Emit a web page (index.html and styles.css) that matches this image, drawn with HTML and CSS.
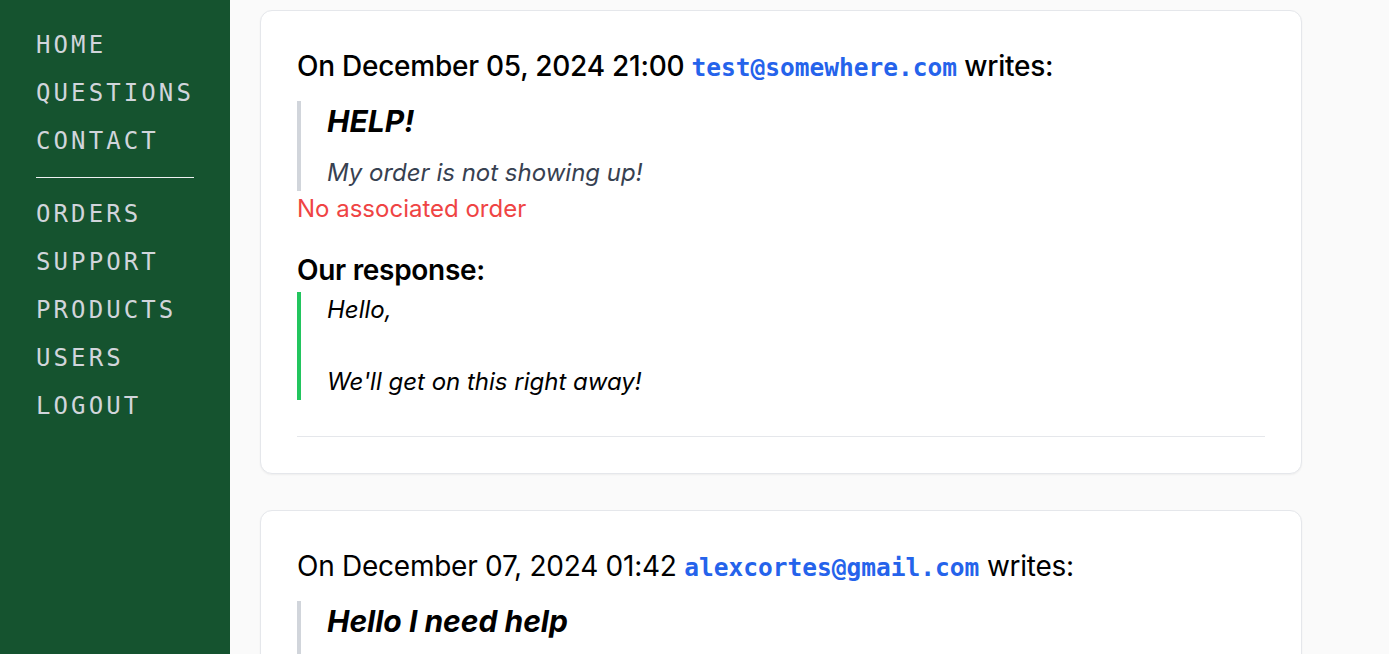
FILE: index.html
```html
<!DOCTYPE html>
<html lang="en">
<head>
<meta charset="utf-8">
<title>Questions</title>
<link rel="stylesheet" href="styles.css">
</head>
<body>
<div class="layout">
  <nav class="sidebar">
    <a class="nav-link" href="#">HOME</a>
    <a class="nav-link" href="#">QUESTIONS</a>
    <a class="nav-link" href="#">CONTACT</a>
    <div class="nav-divider"></div>
    <a class="nav-link" href="#">ORDERS</a>
    <a class="nav-link" href="#">SUPPORT</a>
    <a class="nav-link" href="#">PRODUCTS</a>
    <a class="nav-link" href="#">USERS</a>
    <a class="nav-link" href="#">LOGOUT</a>
  </nav>
  <main class="main">
    <div class="list">
      <article class="card">
        <div class="meta meta-medium">On December 05, 2024 21:00 <span class="email">test@somewhere.com</span> writes:</div>
        <blockquote class="question">
          <div class="subject">HELP!</div>
          <p class="body">My order is not showing up!</p>
        </blockquote>
        <div class="no-order">No associated order</div>
        <div class="response-label">Our response:</div>
        <blockquote class="response">Hello,

We'll get on this right away!</blockquote>
        <div class="rule"></div>
      </article>
      <article class="card">
        <div class="meta">On December 07, 2024 01:42 <span class="email">alexcortes@gmail.com</span> writes:</div>
        <blockquote class="question question-open">
          <div class="subject">Hello I need help</div>
        </blockquote>
      </article>
    </div>
  </main>
</div>
</body>
</html>
```
FILE: styles.css
```css
* { box-sizing: border-box; }
html, body { margin: 0; padding: 0; height: 100%; }
body {
  font-family: Inter, "Noto Sans", sans-serif;
  font-size: 24px;
  line-height: 36px;
  color: #000;
  background: #fafafa;
  overflow: hidden;
}
.layout {
  display: flex;
  min-height: 100vh;
}
.sidebar {
  flex: 0 0 230px;
  width: 230px;
  background: #15532f;
  padding: 21px 36px 0 36px;
  display: flex;
  flex-direction: column;
  align-items: flex-start;
}
.nav-link {
  font-family: "DejaVu Sans Mono", monospace;
  font-size: 24px;
  line-height: 48px;
  letter-spacing: 3.1px;
  color: #d1d5db;
  text-decoration: none;
}
.nav-divider {
  align-self: stretch;
  height: 1px;
  background: #eef0f2;
  margin: 12px 0 12px 0;
}
.main {
  flex: 1;
  padding: 10px 30px;
}
.list {
  width: 1042px;
  display: flex;
  flex-direction: column;
  gap: 36px;
}
.card {
  background: #fff;
  border: 1px solid #e5e7eb;
  border-radius: 12px;
  box-shadow: 0 1px 2px rgba(0,0,0,0.05);
  padding: 37px 36px 36px 36px;
}
.meta {
  font-size: 28px;
  font-weight: 400;
  letter-spacing: -0.25px;
}
.meta-medium { font-weight: 500; }
.email {
  font-family: "DejaVu Sans Mono", monospace;
  font-weight: 700;
  font-size: 24.5px;
  letter-spacing: 0;
  color: #2563eb;
}
.question {
  margin: 15px 0 0 0;
  border-left: 4px solid #d1d5db;
  padding-left: 26px;
}
.question-open {
  padding-bottom: 60px;
}
.subject {
  font-size: 30px;
  line-height: 41px;
  font-weight: 700;
  font-style: italic;
  margin-bottom: 13px;
}
.body {
  margin: 0;
  font-style: italic;
  color: #374151;
}
.no-order {
  color: #ef4444;
}
.response-label {
  margin-top: 25px;
  font-size: 28px;
  font-weight: 600;
  letter-spacing: -0.3px;
}
.response {
  margin: 4px 0 0 0;
  border-left: 4px solid #22c55e;
  padding-left: 26px;
  font-style: italic;
  white-space: pre-line;
}
.rule {
  height: 1px;
  background: #e5e7eb;
  margin-top: 36px;
}
```
